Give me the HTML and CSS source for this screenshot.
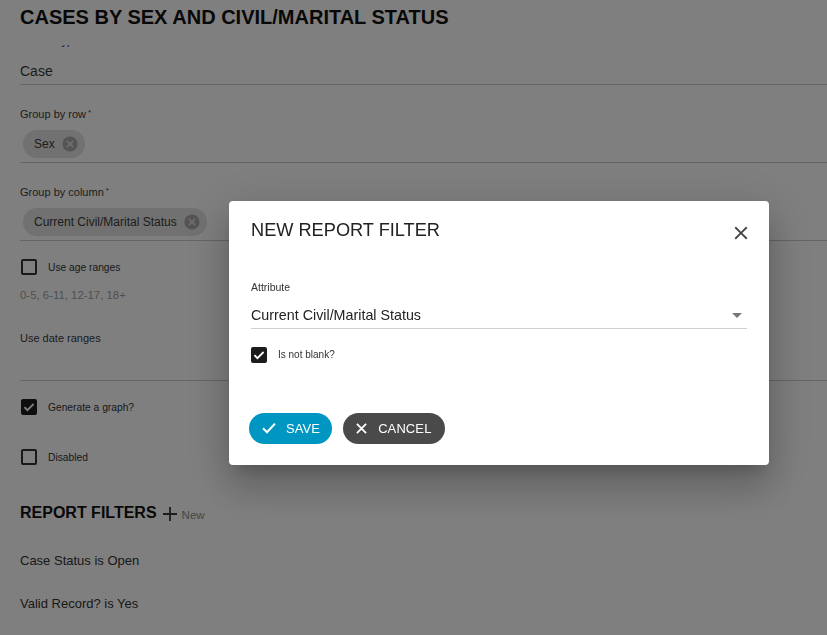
FILE: index.html
```html
<!DOCTYPE html>
<html lang="en">
<head>
<meta charset="utf-8">
<title>Cases by sex and civil/marital status</title>
<link rel="stylesheet" href="styles.css">
</head>
<body>
<div class="page">
  <header class="page-header">
    <h1 class="page-title">CASES BY SEX AND CIVIL/MARITAL STATUS</h1>
  </header>
  <div class="scroll">
    <div class="form">
      <div class="field field-text">
        <div class="field-label">Record type</div>
        <div class="field-value">Case</div>
      </div>

      <div class="field field-chips">
        <div class="field-label">Group by row<span class="req">*</span></div>
        <div class="chips">
          <span class="chip"><span class="chip-text">Sex</span>
            <svg class="chip-del" viewBox="0 0 24 24"><path d="M12 2C6.47 2 2 6.47 2 12s4.47 10 10 10 10-4.47 10-10S17.53 2 12 2zm5 13.59L15.59 17 12 13.41 8.41 17 7 15.59 10.59 12 7 8.41 8.41 7 12 10.59 15.59 7 17 8.41 13.41 12 17 15.59z"/></svg>
          </span>
        </div>
      </div>

      <div class="field field-chips">
        <div class="field-label">Group by column<span class="req">*</span></div>
        <div class="chips">
          <span class="chip"><span class="chip-text">Current Civil/Marital Status</span>
            <svg class="chip-del" viewBox="0 0 24 24"><path d="M12 2C6.47 2 2 6.47 2 12s4.47 10 10 10 10-4.47 10-10S17.53 2 12 2zm5 13.59L15.59 17 12 13.41 8.41 17 7 15.59 10.59 12 7 8.41 8.41 7 12 10.59 15.59 7 17 8.41 13.41 12 17 15.59z"/></svg>
          </span>
        </div>
      </div>

      <label class="check-row check-age">
        <span class="box"></span>
        <span class="check-label">Use age ranges</span>
      </label>
      <div class="hint">0-5, 6-11, 12-17, 18+</div>

      <div class="field field-dates">
        <div class="field-label">Use date ranges</div>
      </div>

      <label class="check-row check-graph">
        <span class="box checked"><svg viewBox="0 0 16 16"><path d="M3.4 8.2l3 3 6.2-6.2"/></svg></span>
        <span class="check-label">Generate a graph?</span>
      </label>

      <label class="check-row check-disabled">
        <span class="box"></span>
        <span class="check-label">Disabled</span>
      </label>

      <div class="filters-head">
        <h2 class="filters-title">REPORT FILTERS</h2>
        <span class="add-new"><svg class="plus" viewBox="0 0 14 14"><path d="M7 0v14M0 7h14"/></svg><span class="new-text">New</span></span>
      </div>
      <ul class="filter-list">
        <li>Case Status is Open</li>
        <li>Valid Record? is Yes</li>
      </ul>
    </div>
  </div>
</div>

<div class="backdrop"></div>

<div class="dialog-layer">
  <div class="dialog" role="dialog">
    <div class="dialog-head">
      <h3 class="dialog-title">NEW REPORT FILTER</h3>
      <svg class="dialog-close" viewBox="0 0 24 24"><path d="M19 6.41L17.59 5 12 10.59 6.41 5 5 6.41 10.59 12 5 17.59 6.41 19 12 13.41 17.59 19 19 17.59 13.41 12z"/></svg>
    </div>
    <div class="dialog-body">
      <div class="d-label">Attribute</div>
      <div class="d-select">
        <span class="d-value">Current Civil/Marital Status</span>
        <svg class="d-arrow" viewBox="0 0 24 24"><path d="M7 10l5 5 5-5z"/></svg>
      </div>
      <label class="d-check">
        <span class="box checked"><svg viewBox="0 0 16 16"><path d="M3.4 8.2l3 3 6.2-6.2"/></svg></span>
        <span class="d-check-label">Is not blank?</span>
      </label>
    </div>
    <div class="dialog-actions">
      <button class="btn btn-save" type="button"><svg class="btn-icon" viewBox="0 0 14 12"><path d="M1 6.2l4 4L13 1.6"/></svg>SAVE</button>
      <button class="btn btn-cancel" type="button"><svg class="btn-icon" viewBox="0 0 12 12"><path d="M1 1l10 10M11 1L1 11"/></svg>CANCEL</button>
    </div>
  </div>
</div>
</body>
</html>
```
FILE: styles.css
```css
* { box-sizing: border-box; }

html, body {
  margin: 0;
  padding: 0;
  height: 100%;
  background: #fff;
  font-family: "Liberation Sans", Arial, Helvetica, sans-serif;
  color: #3a3a3a;
  overflow: hidden;
}

.page {
  height: 100%;
  display: flex;
  flex-direction: column;
}

.page-header {
  flex: 0 0 45px;
  padding: 5px 0 0 20px;
  background: #fff;
}

.page-title {
  margin: 0;
  font-size: 20px;
  line-height: 24px;
  font-weight: bold;
  color: #111;
}

.scroll {
  flex: 1 1 auto;
  overflow: hidden;
}

/* simulates the scrolled position of the form */
.form {
  margin-top: -10px;
  padding-left: 20px;
}

.field {
  border-bottom: 1px solid #cbcbcb;
}

.field-label {
  font-size: 11px;
  line-height: 13px;
  color: #3a3a3a;
}

.req {
  margin-left: 2px;
  font-size: 8px;
  line-height: 0;
  vertical-align: 3px;
}

.field-text .field-value {
  margin-top: 13px;
  font-size: 14px;
  line-height: 20px;
  padding-bottom: 3px;
  color: #3a3a3a;
}

.field-chips {
  margin-top: 23px;
  padding-bottom: 4px;
}

.chips {
  margin-top: 9px;
  display: flex;
}

.chip {
  display: inline-flex;
  align-items: center;
  height: 28px;
  padding: 0 5.5px 0 11px;
  border-radius: 14px;
  background: #e2e2e2;
  margin-left: 3px;
}

.chip-text {
  font-size: 12px;
  color: #3a3a3a;
}

.chip-del {
  width: 18px;
  height: 18px;
  margin-left: 6.5px;
  fill: #a8a8a8;
}

.check-row {
  display: flex;
  align-items: center;
  height: 16px;
}

.box {
  flex: 0 0 16px;
  width: 16px;
  height: 16px;
  margin-left: 1px;
  border: 2px solid #333;
  border-radius: 2px;
  display: flex;
  align-items: center;
  justify-content: center;
}

.box.checked {
  background: #1c1c1c;
  border-color: #1c1c1c;
}

.box svg {
  width: 16px;
  height: 16px;
  flex: 0 0 16px;
  fill: none;
  stroke: #fff;
  stroke-width: 1.8;
}

.check-label {
  margin-left: 11px;
  font-size: 10.25px;
  color: #333;
}

.check-age { margin-top: 18px; }

.hint {
  margin-top: 13px;
  font-size: 11.4px;
  line-height: 14px;
  color: #a0a0a0;
}

.field-dates {
  margin-top: 30px;
  padding-bottom: 35px;
}

.check-graph { margin-top: 18px; }
.check-disabled { margin-top: 34px; }

.filters-head {
  margin-top: 38px;
  display: flex;
  align-items: center;
  height: 20px;
}

.filters-title {
  margin: 0;
  font-size: 16px;
  line-height: 20px;
  font-weight: bold;
  color: #111;
}

.add-new {
  display: inline-flex;
  align-items: center;
  margin-left: 6px;
}

.plus {
  width: 14px;
  height: 14px;
  stroke: #3a3a3a;
  stroke-width: 1.8;
  margin-top: 2px;
}

.new-text {
  margin-left: 5px;
  font-size: 11.5px;
  color: #8e8e8e;
  margin-top: 3px;
}

.filter-list {
  list-style: none;
  margin: 30px 0 0;
  padding: 0;
}

.filter-list li {
  font-size: 13px;
  line-height: 16px;
  color: #333;
  margin-bottom: 26.6px;
}

/* modal */
.backdrop {
  position: fixed;
  inset: 0;
  background: rgba(0, 0, 0, 0.5);
}

.dialog-layer {
  position: fixed;
  inset: 0;
  display: flex;
  align-items: center;
  justify-content: center;
  padding: 31px 0 0 171px;
}

.dialog {
  width: 540px;
  background: #fff;
  border-radius: 4px;
  padding-bottom: 21px;
  box-shadow: 0 11px 15px -7px rgba(0,0,0,.2), 0 24px 38px 3px rgba(0,0,0,.14), 0 9px 46px 8px rgba(0,0,0,.12);
}

.dialog-head {
  display: flex;
  justify-content: space-between;
  align-items: flex-start;
  padding: 17px 17.4px 0 22px;
}

.dialog-title {
  margin: 0;
  font-size: 18.2px;
  line-height: 24px;
  font-weight: normal;
  color: #222;
}

.dialog-close {
  width: 22px;
  height: 22px;
  margin-top: 3.6px;
  fill: #444;
}

.dialog-body {
  padding: 0 22px;
}

.d-label {
  margin-top: 37.5px;
  font-size: 10.5px;
  line-height: 12px;
  color: #333;
}

.d-select {
  margin-top: 11.5px;
  display: flex;
  align-items: center;
  justify-content: space-between;
  padding-bottom: 2.5px;
  border-bottom: 1px solid #d0d0d0;
  height: 24px;
}

.d-value {
  font-size: 14.3px;
  line-height: 20px;
  color: #222;
}

.d-arrow {
  width: 24px;
  height: 24px;
  margin-right: -2px;
  fill: #777;
}

.d-check {
  margin-top: 18px;
  display: flex;
  align-items: center;
  height: 16px;
}

.d-check .box { margin-left: 0; }

.d-check-label {
  margin-left: 11px;
  font-size: 10px;
  color: #333;
}

.dialog-actions {
  margin-top: 50px;
  padding: 0 20px;
  display: flex;
  gap: 11px;
}

.btn {
  display: inline-flex;
  align-items: center;
  height: 31px;
  border: none;
  border-radius: 16px;
  padding: 0 13px 0 13px;
  font-family: "Liberation Sans", Arial, Helvetica, sans-serif;
  font-size: 13px;
  color: #fff;
  letter-spacing: 0.1px;
}

.btn-icon {
  fill: none;
  stroke: #fff;
  stroke-width: 2;
  margin-right: 10px;
}

.btn-save { background: #0096c2; padding-right: 12px; }
.btn-save .btn-icon { width: 14px; height: 12px; }

.btn-cancel { background: #4a4a4a; padding-right: 14px; }
.btn-cancel .btn-icon { width: 11px; height: 11px; margin-right: 11px; }
```
